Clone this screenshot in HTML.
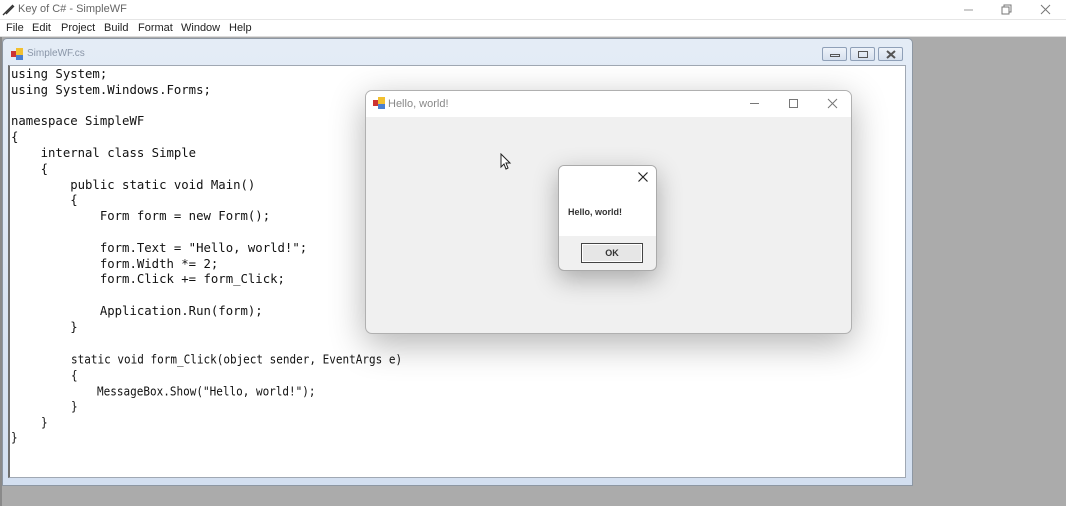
<!DOCTYPE html>
<html><head><style>
*{margin:0;padding:0;box-sizing:border-box}
body{width:1066px;height:506px;position:relative;overflow:hidden;background:#fff;font-family:"Liberation Sans",sans-serif}
.abs{position:absolute}
#title{left:0;top:0;width:1066px;height:19px;background:#fff;font-size:11px;color:#666}
#menu{left:0;top:19px;width:1066px;height:18px;background:#fff;border-top:1px solid #e6e6e6;border-bottom:1px solid #ddd;font-size:11px;color:#222}
#menu span{position:absolute;top:2px}
#mdi{left:0;top:37px;width:1066px;height:469px;background:#ababab;border-left:2px solid #8a8a8a}
#child{left:2px;top:38px;width:911px;height:448px;background:linear-gradient(#e4ecf6,#d3dff0);border:1px solid #8d97a3;border-radius:5px 5px 0 0}
#edit{left:8px;top:65px;width:898px;height:413px;background:#fff;border:1px solid #a0a8b3;border-left:2px solid #707070}
pre{position:absolute;left:11px;top:67px;font-family:"DejaVu Sans Mono",monospace;font-size:12.3px;line-height:15.8px;color:#111}
.nb{position:absolute;font-family:"DejaVu Sans Mono",monospace;font-size:11px;color:#111;transform:scaleY(1.15);transform-origin:left top}
.btn{position:absolute;top:47px;width:25px;height:14px;border:1px solid #8fa0b8;border-radius:2px;background:linear-gradient(#eef3fa,#d6e0ee)}
#hello{left:365px;top:90px;width:487px;height:244px;background:#f0f0f0;border:1px solid #b0b0b0;border-radius:7px;box-shadow:0 10px 35px rgba(0,0,0,.3);overflow:hidden}
#htb{left:0;top:0;width:100%;height:26px;background:#fff;font-size:11px;color:#888}
#mb{left:558px;top:165px;width:99px;height:106px;background:#f0f0f0;border:1px solid #aaa;border-radius:6px;box-shadow:0 8px 25px rgba(0,0,0,.3);overflow:hidden}
</style></head><body>
<div id="title" class="abs">
<svg class="abs" style="left:2px;top:2px" width="14" height="14" viewBox="0 0 14 14"><path d="M2 12 L11 3 M4 12 L12 4 M2 12 L1 13" stroke="#333" stroke-width="1.3" fill="none"/></svg>
<span class="abs" style="left:18px;top:3px">Key of C# - SimpleWF</span>
<svg class="abs" style="left:960px;top:4px" width="100" height="12"><path d="M4 6h9" stroke="#999"/><path d="M42 3h7v7h-7z M44 3v-2h7v7h-2" stroke="#777" fill="none"/><path d="M81 1l9 9M90 1l-9 9" stroke="#777"/></svg>
</div>
<div id="menu" class="abs"><span style="left:6px">File</span><span style="left:32px">Edit</span><span style="left:61px">Project</span><span style="left:104px">Build</span><span style="left:138px">Format</span><span style="left:181px">Window</span><span style="left:229px">Help</span></div>
<div id="mdi" class="abs"></div>
<div id="child" class="abs"></div>
<svg class="abs" style="left:11px;top:48px" width="12" height="12"><rect x="0" y="3" width="6" height="6" fill="#c33"/><rect x="5" y="0" width="7" height="7" fill="#f2c030"/><rect x="5" y="7" width="7" height="5" fill="#4a7fd0"/></svg>
<span class="abs" style="left:27px;top:48px;font-size:10px;color:#8a96a8">SimpleWF.cs</span>
<div class="btn" style="left:822px"><div class="abs" style="left:7px;top:6px;width:10px;height:3px;border:1px solid #555"></div></div>
<div class="btn" style="left:850px"><div class="abs" style="left:7px;top:3px;width:10px;height:7px;border:1px solid #555"></div></div>
<div class="btn" style="left:878px"><svg class="abs" style="left:7px;top:2px" width="10" height="9"><path d="M1 1l8 7M9 1l-8 7" stroke="#555" stroke-width="2"/></svg></div>
<div id="edit" class="abs"></div>
<pre>using System;
using System.Windows.Forms;

namespace SimpleWF
{
    internal class Simple
    {
        public static void Main()
        {
            Form form = new Form();

            form.Text = "Hello, world!";
            form.Width *= 2;
            form.Click += form_Click;

            Application.Run(form);
        }
</pre>
<div class="nb" style="left:71px;top:352px">static void form_Click(object sender, EventArgs e)</div>
<div class="nb" style="left:71px;top:368px">{</div>
<div class="nb" style="left:97px;top:384px">MessageBox.Show("Hello, world!");</div>
<div class="nb" style="left:71px;top:399px">}</div>
<div class="nb" style="left:41px;top:415px">}</div>
<div class="nb" style="left:11px;top:430px">}</div>
<div id="hello" class="abs">
<div id="htb" class="abs">
<svg class="abs" style="left:7px;top:6px" width="12" height="12"><rect x="0" y="3" width="6" height="6" fill="#c33"/><rect x="5" y="0" width="7" height="7" fill="#f2c030"/><rect x="5" y="7" width="7" height="5" fill="#4a7fd0"/></svg>
<span class="abs" style="left:22px;top:7px">Hello, world!</span>
<svg class="abs" style="left:380px;top:6px" width="100" height="14"><path d="M4 6.5h9" stroke="#777"/><path d="M43.5 2.5h8v8h-8z" stroke="#777" fill="none"/><path d="M82 2l9 9M91 2l-9 9" stroke="#777"/></svg>
</div>
</div>
<svg class="abs" style="left:500px;top:153px" width="12" height="17"><path d="M1 1v13l3-3 2 5 2-1-2-5h4z" fill="#fff" stroke="#222"/></svg>
<div id="mb" class="abs">
<div class="abs" style="left:0;top:0;width:100%;height:70px;background:#fff"></div>
<svg class="abs" style="left:78px;top:5px" width="12" height="12"><path d="M1.5 1.5l9 9M10.5 1.5l-9 9" stroke="#222" stroke-width="1.2"/></svg>
<span class="abs" style="left:9px;top:41px;font-size:9px;font-weight:bold;color:#333">Hello, world!</span>
<div class="abs" style="left:22px;top:77px;width:62px;height:20px;background:#e6e6e6;border:1px solid #444;box-shadow:inset 0 0 0 1px #fff;font-size:9px;font-weight:bold;text-align:center;line-height:18px;color:#333">OK</div>
</div>
</body></html>
